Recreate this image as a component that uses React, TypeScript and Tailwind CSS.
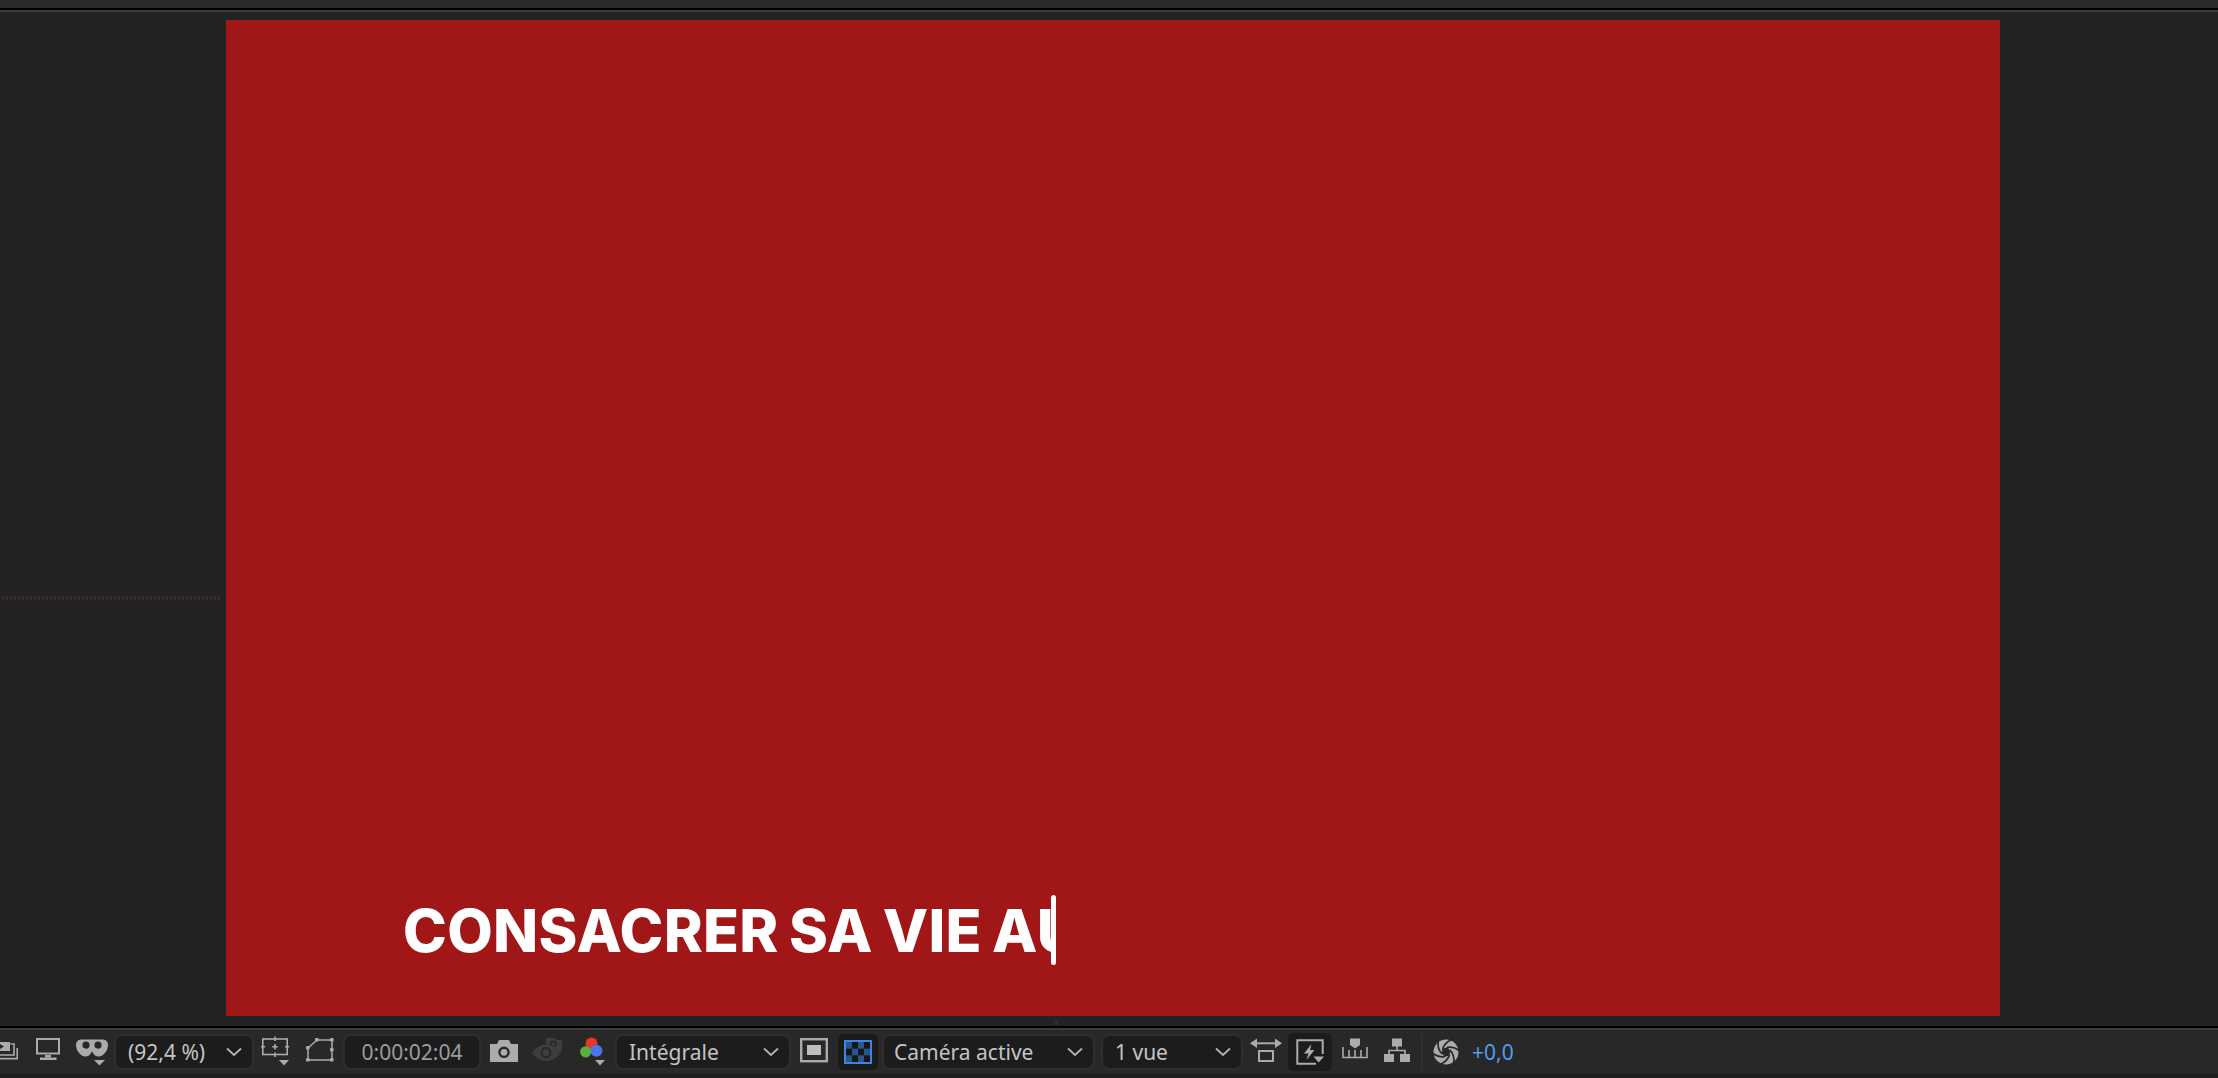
const G = "#ababab";

function Chevron() {
  return (
    <svg width="16" height="10" viewBox="0 0 16 10" className="shrink-0">
      <path d="M1 1.5 L8 8 L15 1.5" fill="none" stroke="#b4b4b4" strokeWidth="1.8" />
    </svg>
  );
}

function Select({ label, cls, pad }: { label: string; cls: string; pad: string }) {
  return (
    <div className={`flex h-[36px] shrink-0 items-center justify-between rounded-lg border-2 border-[#2e2e2e] bg-[#1c1c1c] pr-[10px] ${pad} ${cls}`}>
      <span className="text-[21px] leading-none text-[#c4c4c4]">{label}</span>
      <Chevron />
    </div>
  );
}

function PreviewIcon() {
  return (
    <svg width="18" height="32" viewBox="0 0 18 32" className="shrink-0">
      <path d="M0 6 H10 V15 H0 Z" fill={G} />
      <path d="M0 8 L4 10.5 L0 13 Z" fill="#282828" />
      <path d="M10.5 8 H14 V19 H0" fill="none" stroke={G} strokeWidth="1.6" />
      <path d="M17.2 12 V22.6 H0" fill="none" stroke={G} strokeWidth="1.6" />
    </svg>
  );
}

function MonitorIcon() {
  return (
    <svg width="24" height="32" viewBox="0 0 24 32" className="ml-[18px] shrink-0">
      <rect x="1" y="3" width="22" height="14.5" fill="none" stroke={G} strokeWidth="2" />
      <rect x="9" y="19" width="6" height="2.5" fill={G} />
      <rect x="4" y="21.5" width="16.5" height="2.5" fill={G} />
    </svg>
  );
}

function GlassesIcon() {
  return (
    <svg width="32" height="32" viewBox="0 0 32 32" className="ml-4 shrink-0">
      <path
        fillRule="evenodd"
        fill={G}
        d="M5 3.5 H27 Q32 4 32 9 Q32 14 28 18 Q25 21 22 20.5 Q18 20 16.5 16 Q16 15 15.5 16 Q14 20 10 20.5 Q7 21 4 18 Q0 14 0 9 Q0 4 5 3.5 Z M10 5.5 A3.6 3.6 0 1 0 10.01 12.7 A3.6 3.6 0 1 0 10 5.5 Z M22 5.5 A3.6 3.6 0 1 0 22.01 12.7 A3.6 3.6 0 1 0 22 5.5 Z"
      />
      <path d="M18 24 H29 L23.5 29.5 Z" fill={G} />
    </svg>
  );
}

function SafeIcon() {
  return (
    <svg width="28" height="32" viewBox="0 0 28 32" className="ml-[7px] shrink-0">
      <rect x="1.8" y="3" width="24.4" height="15.5" fill="none" stroke={G} strokeWidth="1.6" />
      <path d="M14 0.5 V5 M14 16.5 V21 M0 10.7 H4 M24 10.7 H28 M14 8 V13.4 M11.3 10.7 H16.7" stroke={G} strokeWidth="1.6" />
      <path d="M18 24 H28 L23 29.5 Z" fill={G} />
    </svg>
  );
}

function MaskIcon() {
  return (
    <svg width="28" height="32" viewBox="0 0 28 32" className="ml-[17px] shrink-0">
      <path d="M2 12 L11 4 H26 V24 H2 Z" fill="none" stroke={G} strokeWidth="1.5" />
      <g fill={G}>
        <rect x="0" y="10" width="3.6" height="3.6" rx="1" />
        <rect x="9" y="2" width="3.6" height="3.6" rx="1" />
        <rect x="24" y="2" width="3.6" height="3.6" rx="1" />
        <rect x="24" y="12" width="3.6" height="3.6" rx="1" />
        <rect x="24" y="22" width="3.6" height="3.6" rx="1" />
        <rect x="0" y="22" width="3.6" height="3.6" rx="1" />
      </g>
    </svg>
  );
}

function CameraIcon() {
  return (
    <svg width="28" height="32" viewBox="0 0 28 32" className="ml-[9px] shrink-0">
      <path fillRule="evenodd" fill={G} d="M0 8 H7 L9 4 H19 L21 8 H28 V26 H0 Z M14 10.5 A5.8 5.8 0 1 0 14.01 22.1 A5.8 5.8 0 1 0 14 10.5 Z" />
      <circle cx="14" cy="16.3" r="3.4" fill={G} />
    </svg>
  );
}

function EyeIcon() {
  return (
    <svg width="30" height="32" viewBox="0 0 30 32" className="ml-[14px] shrink-0">
      <path fill="#3e3e3e" d="M14 2 H24 V4 H30 V15 H22 Q20 9 14 8 Z" />
      <circle cx="21.5" cy="8" r="3.4" fill="#282828" />
      <circle cx="21.5" cy="8" r="1.8" fill="#3e3e3e" />
      <path fillRule="evenodd" fill="#3e3e3e" d="M0 17 Q6 8.5 14 8.5 Q22 8.5 29 17 Q22 25 14 25 Q6 25 0 17 Z M14 11 A5.6 5.6 0 1 0 14.01 22.2 A5.6 5.6 0 1 0 14 11 Z" />
      <circle cx="14" cy="16.6" r="3.4" fill="#3e3e3e" />
    </svg>
  );
}

function ColorIcon() {
  return (
    <svg width="25" height="32" viewBox="0 0 25 32" className="ml-[18px] shrink-0">
      <circle cx="11.5" cy="7.5" r="6" fill="#e8342a" />
      <circle cx="5.7" cy="15.8" r="5.6" fill="#55b13f" />
      <circle cx="16.5" cy="14.8" r="6" fill="#4a74e8" />
      <path d="M15 24 H25 L20 29.5 Z" fill={G} />
    </svg>
  );
}

function RegionIcon() {
  return (
    <svg width="28" height="32" viewBox="0 0 28 32" className="ml-[9px] shrink-0">
      <rect x="1.2" y="3.2" width="25.6" height="22" fill="none" stroke={G} strokeWidth="2.4" />
      <rect x="7" y="9" width="14" height="10" fill="#bdbdbd" />
    </svg>
  );
}

function CheckerIcon() {
  const cells: [number, number][] = [
    [0, 0], [2, 0], [1, 1], [3, 1], [0, 2], [2, 2],
  ];
  return (
    <div className="ml-[10px] flex h-[36px] w-[40px] shrink-0 items-center justify-center rounded-md bg-[#1a1a1a]">
      <svg width="28" height="24" viewBox="0 0 28 24">
        <rect x="1" y="1" width="26" height="22" fill="#171717" stroke="#3f86dc" strokeWidth="2" />
        {cells.map(([c, r]) => (
          <rect key={`${c}-${r}`} x={2 + c * 6} y={2 + r * 6.67} width="6" height="6.67" fill="#28578f" />
        ))}
      </svg>
    </div>
  );
}

function ResizeIcon() {
  return (
    <svg width="32" height="32" viewBox="0 0 32 32" className="ml-[7px] shrink-0">
      <path d="M4 7.3 H28" stroke={G} strokeWidth="2" />
      <path d="M0 7.3 L7 2.5 V12 Z M32 7.3 L25 2.5 V12 Z" fill={G} />
      <rect x="9" y="15" width="14" height="10" fill="none" stroke={G} strokeWidth="2" />
    </svg>
  );
}

function FastIcon() {
  return (
    <div className="ml-[6px] flex h-[38px] w-[44px] shrink-0 items-center justify-center rounded-md bg-[#1c1c1c]">
      <svg width="28" height="26" viewBox="0 0 28 26">
        <path d="M20 24.7 H1.3 V1.3 H26.7 V15" fill="none" stroke={G} strokeWidth="2" />
        <path d="M15.5 5 L8 14.5 H12.5 L10.5 21 L18.5 11 H14 Z" fill={G} />
        <path d="M17.5 17.5 H28 L22.7 23.5 Z" fill={G} />
      </svg>
    </div>
  );
}

function FlowIcon() {
  return (
    <svg width="26" height="32" viewBox="0 0 26 32" className="ml-[10px] shrink-0">
      <path d="M8 2.5 H18 V9 L13 12.5 L8 9 Z" fill={G} />
      <path d="M1 11 V21.5 H25 V11 M7 14 V21 M19 14 V21 M13 14 V21" fill="none" stroke={G} strokeWidth="1.6" />
    </svg>
  );
}

function TreeIcon() {
  return (
    <svg width="26" height="32" viewBox="0 0 26 32" className="ml-4 shrink-0">
      <g fill={G}>
        <rect x="8" y="2.5" width="10" height="8" />
        <rect x="0" y="18" width="10" height="8" />
        <rect x="16" y="18" width="10" height="8" />
      </g>
      <path d="M13 10 V14.5 M5 18 V14.5 H21 V18" fill="none" stroke={G} strokeWidth="1.6" />
    </svg>
  );
}

function ApertureIcon() {
  return (
    <svg width="26" height="32" viewBox="0 0 26 32" className="ml-[10px] shrink-0">
      <circle cx="13" cy="16" r="12.5" fill={G} />
      <circle cx="13" cy="16" r="4.2" fill="#282828" />
      {[0, 60, 120, 180, 240, 300].map((a) => (
        <path
          key={a}
          d="M9.5 13.5 Q11 7 19 3.5"
          fill="none"
          stroke="#282828"
          strokeWidth="1.7"
          transform={`rotate(${a} 13 16)`}
        />
      ))}
    </svg>
  );
}

export default function App() {
  return (
    <div className="flex h-[1078px] w-[2218px] flex-col overflow-hidden bg-[#232323] font-['Noto_Sans',sans-serif]">
      <div className="h-2 shrink-0 bg-[#2a2a2a]" />
      <div className="h-0.5 shrink-0 bg-black" />
      <div className="h-0.5 shrink-0 bg-[#3c3c3c]" />

      <div className="relative flex min-h-0 flex-1 pt-2 pb-2.5">
        <div className="w-[226px] shrink-0 pt-[576px] pl-0.5">
          <div className="h-1 w-[218px] bg-[repeating-linear-gradient(90deg,#432a2a_0_2px,transparent_2px_4px)]" />
        </div>
        <div className="flex w-[1774px] shrink-0 flex-col justify-end bg-[#a11616] pb-[51px] pl-[177px]">
          <div className="flex h-[70px] items-center">
            <span className="inline-block w-[648px] overflow-hidden whitespace-nowrap font-['Inter',sans-serif] text-[59px] leading-none font-extrabold tracking-[0.005em] [word-spacing:-3px] text-white">
              CONSACRER SA VIE AU
            </span>
            <div className="h-[70px] w-[5px] shrink-0 rounded-sm bg-white" />
          </div>
        </div>
        <div className="absolute top-[1008px] left-[1055px] h-[5px] w-[3px] bg-[repeating-linear-gradient(0deg,#432a2a_0_2px,transparent_2px_3px)]" />
      </div>

      <div className="h-0.5 shrink-0 bg-black" />
      <div className="h-0.5 shrink-0 bg-[#3c3c3c]" />

      <div className="flex h-[44px] shrink-0 items-center bg-[#282828]">
        <PreviewIcon />
        <MonitorIcon />
        <GlassesIcon />
        <Select label="(92,4 %)" cls="ml-[6px] w-[140px]" pad="pl-3" />
        <SafeIcon />
        <MaskIcon />
        <div className="ml-[9px] flex h-[36px] w-[138px] shrink-0 items-center justify-center rounded-lg border-2 border-[#2e2e2e] bg-[#1c1c1c] text-[21px] leading-none text-[#9c9c9c]">
          0:00:02:04
        </div>
        <CameraIcon />
        <EyeIcon />
        <ColorIcon />
        <Select label="Intégrale" cls="ml-[10px] w-[176px]" pad="pl-3" />
        <RegionIcon />
        <CheckerIcon />
        <Select label="Caméra active" cls="ml-1 w-[213px]" pad="pl-[10px]" />
        <Select label="1 vue" cls="ml-[6px] w-[142px]" pad="pl-3" />
        <ResizeIcon />
        <FastIcon />
        <FlowIcon />
        <TreeIcon />
        <div className="ml-[11px] h-[36px] w-0.5 shrink-0 bg-[#2f2f2f]" />
        <ApertureIcon />
        <span className="ml-[13px] text-[21px] leading-none text-[#4f9fef]">+0,0</span>
      </div>

      <div className="h-1 shrink-0 bg-[#1d1d1d]" />
    </div>
  );
}
